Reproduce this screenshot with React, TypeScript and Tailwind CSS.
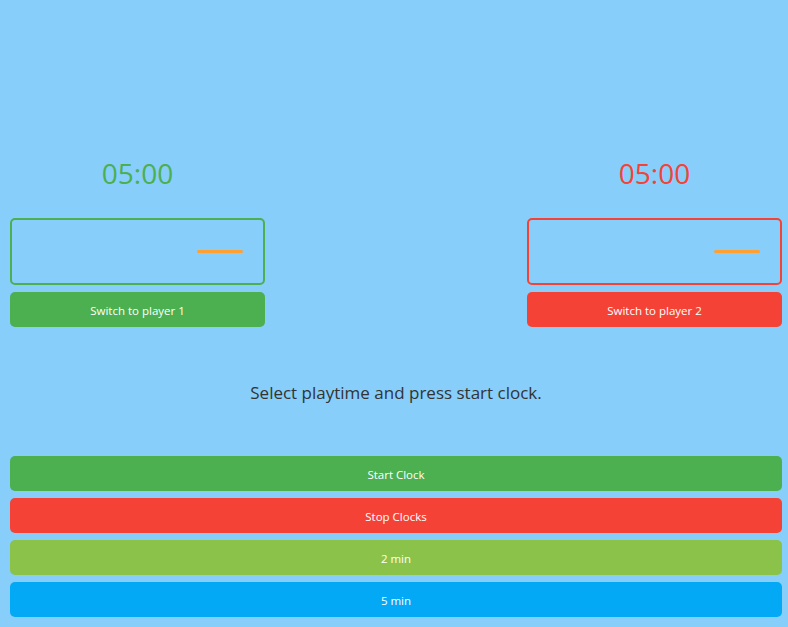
import React from "react";

function Panel({ color, label }: { color: "green" | "red"; label: string }) {
  const isGreen = color === "green";
  return (
    <div className="flex w-[255px] flex-col">
      <div
        className={`h-[40px] text-center text-[28px] leading-[40px] ${isGreen ? "text-[#4caf50]" : "text-[#f44336]"}`}
      >
        05:00
      </div>
      <div
        className={`mt-[25px] flex h-[67px] items-center justify-end rounded-[5px] border-2 pr-[20px] ${
          isGreen ? "border-[#4caf50]" : "border-[#f44336]"
        }`}
      >
        <div className="h-[3px] w-[46px] rounded-full bg-[#ffa033]" />
      </div>
      <button
        className={`mt-[7px] h-[35px] rounded-[5px] pt-[2px] text-[11.5px] text-white ${
          isGreen ? "bg-[#4caf50]" : "bg-[#f44336]"
        }`}
      >
        {label}
      </button>
    </div>
  );
}

export default function App() {
  return (
    <div
      className="min-h-[627px] w-full bg-[#87cefa] pl-[10px] pr-[6px] pt-[153px] pb-[10px]"
      style={{ fontFamily: '"Open Sans", "Noto Sans", sans-serif' }}
    >
      <div className="flex justify-between">
        <Panel color="green" label="Switch to player 1" />
        <Panel color="red" label="Switch to player 2" />
      </div>
      <div className="mt-[52px] h-[28px] text-center text-[17px] leading-[28px] text-[#333333]">
        Select playtime and press start clock.
      </div>
      <div className="mt-[49px] flex flex-col gap-[7px]">
        <button className="h-[35px] rounded-[5px] bg-[#4caf50] pt-[2px] text-[11.5px] text-white">Start Clock</button>
        <button className="h-[35px] rounded-[5px] bg-[#f44336] pt-[2px] text-[11.5px] text-white">Stop Clocks</button>
        <button className="h-[35px] rounded-[5px] bg-[#8bc34a] pt-[2px] text-[11.5px] text-white">2 min</button>
        <button className="h-[35px] rounded-[5px] bg-[#03a9f4] pt-[2px] text-[11.5px] text-white">5 min</button>
      </div>
    </div>
  );
}
